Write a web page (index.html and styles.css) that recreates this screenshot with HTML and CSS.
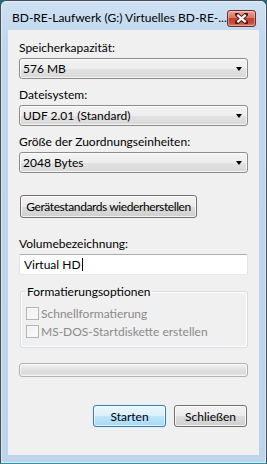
FILE: index.html
```html
<!doctype html>
<html>
    <head>
        <meta charset="utf-8" />
        <title>BD-RE-Laufwerk formatieren</title>
        <link rel="stylesheet" href="styles.css">
    </head>
    <body>
        <div class="window">
            <header class="titlebar">
                <span class="title">BD-RE-Laufwerk (G:) Virtuelles BD-RE-...</span>
                <button class="close" type="button">
                    <svg width="13" height="11" viewBox="0 0 13 11">
                        <path d="M2 1.5 L11 9.5 M11 1.5 L2 9.5" stroke="#4a1616" stroke-width="4" stroke-linecap="square" />
                        <path d="M2.3 1.8 L10.7 9.2 M10.7 1.8 L2.3 9.2" stroke="#ffffff" stroke-width="2.2" />
                    </svg>
                </button>
            </header>
            <main class="client">
                <div class="lbl">Speicherkapazität:</div>
                <div class="combo"><span>576 MB</span><i class="arrow"></i></div>

                <div class="lbl">Dateisystem:</div>
                <div class="combo"><span>UDF 2.01 (Standard)</span><i class="arrow"></i></div>

                <div class="lbl">Größe der Zuordnungseinheiten:</div>
                <div class="combo"><span>2048 Bytes</span><i class="arrow"></i></div>

                <button class="btn restore" type="button">Gerätestandards wiederherstellen</button>

                <div class="lbl">Volumebezeichnung:</div>
                <div class="textbox">Virtual HD<span class="caret"></span></div>

                <fieldset class="group">
                    <legend>Formatierungsoptionen</legend>
                    <div class="check"><span class="box"></span>Schnellformatierung</div>
                    <div class="check"><span class="box"></span>MS-DOS-Startdiskette erstellen</div>
                </fieldset>

                <div class="progress"></div>

                <div class="actions">
                    <button class="btn default" type="button">Starten</button>
                    <button class="btn" type="button">Schließen</button>
                </div>
            </main>
        </div>
    </body>
</html>
```

FILE: styles.css
```css
html, body {
    margin: 0px;
    padding: 0px;
}

body {
    font-family: Lato, "Open Sans", sans-serif;
    font-size: 12px;
    color: #000;
    background: #1e6f80;
}

.window {
    box-sizing: border-box;
    width: 267px;
    height: 464px;
    display: flex;
    flex-direction: column;
    border: 1px solid #434f5b;
    border-bottom-color: #2a97a8;
    border-radius: 6px 6px 0 0;
    padding: 0 7px 8px 7px;
    background: linear-gradient(180deg, #cfe1f3 0px, #c0d7ee 40px, #bcd4ec 100%);
    box-shadow: inset 0 0 0 1px rgba(255, 255, 255, 0.45);
}

.titlebar {
    height: 29px;
    display: flex;
    align-items: flex-start;
}

.title {
    flex: 1;
    padding: 9px 0 0 4px;
    line-height: 15px;
    white-space: nowrap;
}

.close {
    margin: 9px 3px 0 0;
    width: 29px;
    height: 17px;
    padding: 0;
    display: flex;
    align-items: center;
    justify-content: center;
    border: 1px solid #6d2a2a;
    border-radius: 3px;
    background: linear-gradient(180deg, #eaa493 0%, #d67564 45%, #c3412e 50%, #c84b37 80%, #dc7e68 100%);
    box-shadow: inset 0 0 0 1px rgba(255, 255, 255, 0.35);
}

.client {
    flex: 1;
    background: #f0f0f0;
    padding: 10px 11px 0 11px;
    display: flex;
    flex-direction: column;
}

.lbl {
    line-height: 15px;
    height: 15px;
    margin-bottom: 3px;
    white-space: nowrap;
}

.combo {
    box-sizing: border-box;
    height: 21px;
    margin-bottom: 8px;
    display: flex;
    align-items: center;
    padding: 0 5px 0 3px;
    border: 1px solid #8c8c8c;
    border-radius: 3px;
    background: linear-gradient(180deg, #f4f4f4 0%, #ededed 50%, #e2e2e2 51%, #d9d9d9 100%);
    box-shadow: inset 0 0 0 1px rgba(255, 255, 255, 0.7);
}

.combo span {
    flex: 1;
}

.arrow {
    width: 0;
    height: 0;
    border-left: 3.5px solid transparent;
    border-right: 3.5px solid transparent;
    border-top: 4px solid #000;
    margin-top: 1px;
}

.btn {
    box-sizing: border-box;
    height: 22px;
    padding: 0;
    font: inherit;
    color: #000;
    white-space: nowrap;
    border: 1px solid #707070;
    border-radius: 3px;
    background: linear-gradient(180deg, #f2f2f2 0%, #ebebeb 50%, #dddddd 51%, #cfcfcf 100%);
    box-shadow: inset 0 0 0 1px rgba(255, 255, 255, 0.75);
}

.restore {
    align-self: flex-start;
    width: 177px;
    height: 23px;
    margin: 14px 0 18px 1px;
    letter-spacing: -0.4px;
}

.textbox {
    box-sizing: border-box;
    height: 21px;
    display: flex;
    align-items: center;
    padding-left: 4px;
    background: #fff;
    border: 1px solid #e2e3ea;
    border-top-color: #abadb3;
    border-bottom-color: #e3e9ef;
    border-radius: 2px;
}

.caret {
    width: 1px;
    height: 13px;
    background: #000;
    margin-left: 1px;
}

.group {
    margin: 9px 0 0 1px;
    padding: 5px 5px 7px 5px;
    border: 1px solid #d5dfe5;
    border-radius: 3px;
    box-shadow: inset 0 0 0 1px #fff;
}

.group legend {
    padding: 0 1px;
    line-height: 15px;
}

.check {
    display: flex;
    align-items: center;
    height: 18px;
    color: #8a8a8a;
}

.box {
    box-sizing: border-box;
    width: 13px;
    height: 13px;
    margin-right: 2px;
    border: 1px solid #b4b4b4;
    background: linear-gradient(135deg, #f0f0f0, #fafafa);
    box-shadow: inset 0 0 0 1px #f7f7f7;
}

.progress {
    box-sizing: border-box;
    height: 14px;
    margin-top: 15px;
    border: 1px solid #b2b2b2;
    border-radius: 3px;
    background: linear-gradient(180deg, #f4f4f4 0%, #e4e4e4 40%, #dadada 70%, #e6e6e6 100%);
    box-shadow: inset 0 0 0 1px rgba(255, 255, 255, 0.6);
}

.actions {
    display: flex;
    justify-content: flex-end;
    gap: 8px;
    margin: 28px 1px 0 0;
}

.actions .btn {
    width: 73px;
}

.btn.default {
    border-color: #3c7fb1;
    background: linear-gradient(180deg, #eaf6fd 0%, #d9f0fc 50%, #bee6fd 51%, #a7d9f5 100%);
    box-shadow: inset 0 0 0 1px rgba(255, 255, 255, 0.6), 0 0 1px #6ec6f0;
}
```
